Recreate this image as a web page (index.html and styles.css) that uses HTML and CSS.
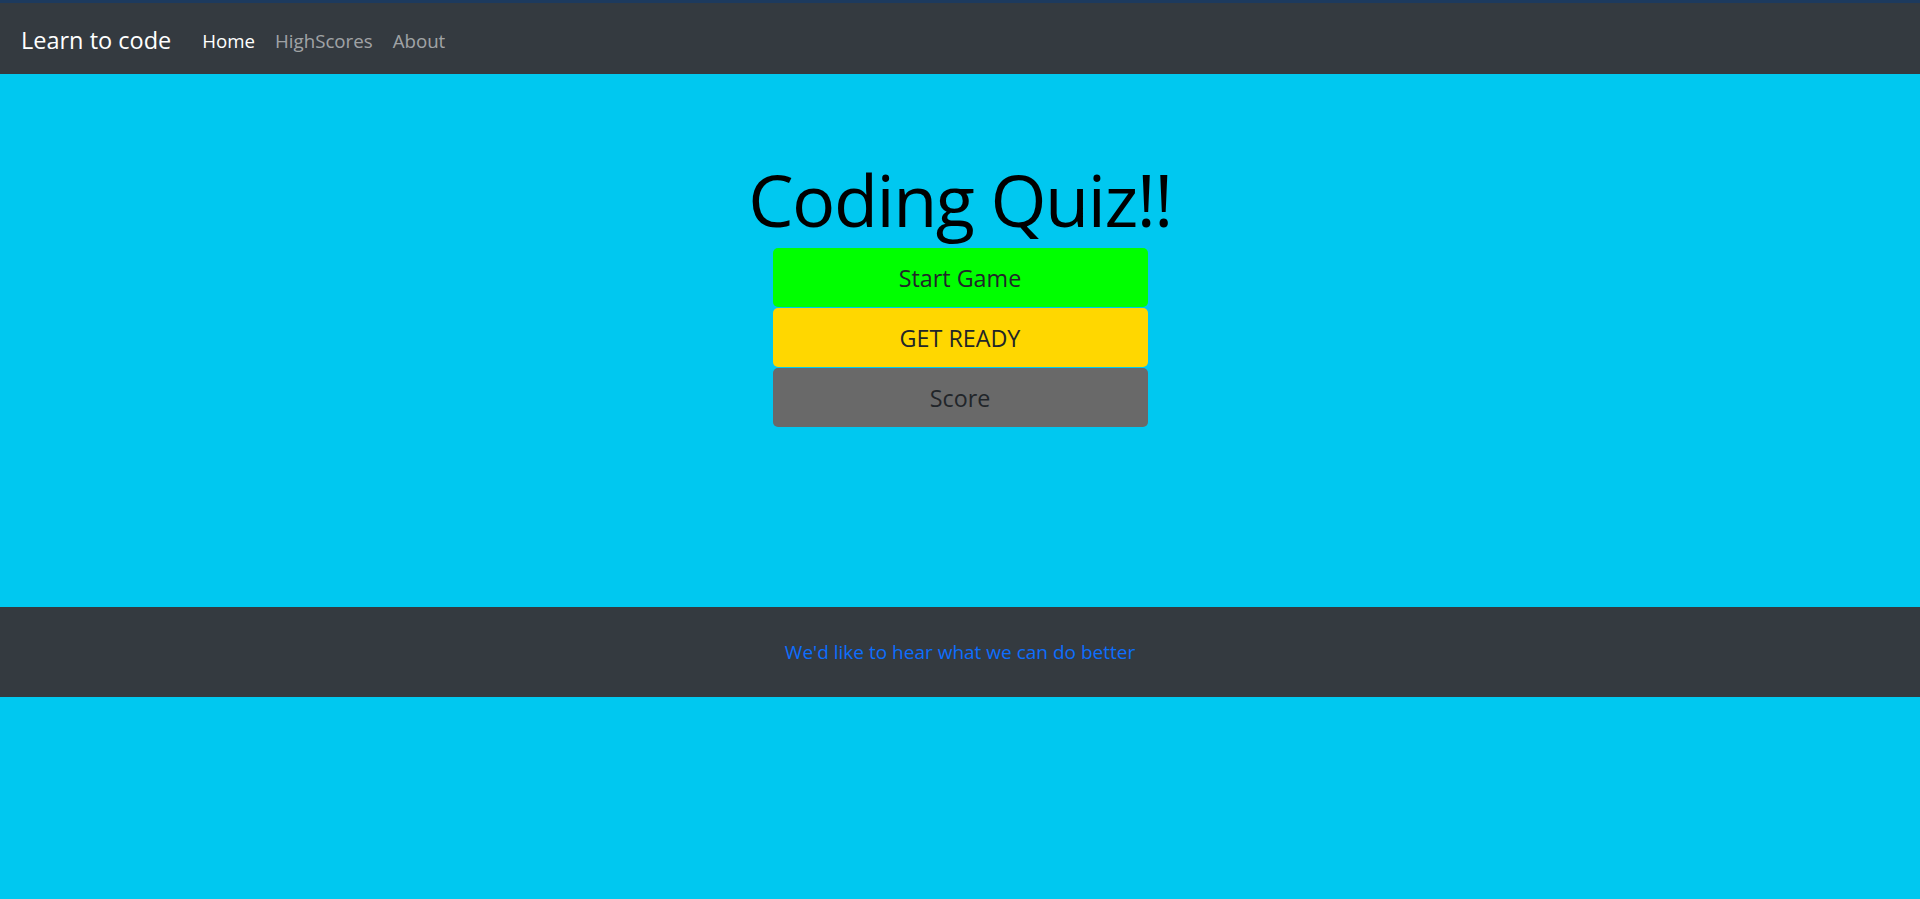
FILE: index.html
```html
<!DOCTYPE html>
<html lang="en">
<head>
<meta charset="utf-8">
<title>Coding Quiz</title>
<link rel="stylesheet" href="styles.css">
</head>
<body>
<nav class="navbar">
  <a class="brand" href="#">Learn to code</a>
  <ul class="nav-links">
    <li><a class="nav-link active" href="#">Home</a></li>
    <li><a class="nav-link" href="#">HighScores</a></li>
    <li><a class="nav-link" href="#">About</a></li>
  </ul>
</nav>
<main class="main">
  <h1 class="title">Coding Quiz!!</h1>
  <div class="buttons">
    <button class="btn btn-start">Start Game</button>
    <button class="btn btn-ready">GET READY</button>
    <button class="btn btn-score">Score</button>
  </div>
</main>
<footer class="footer">
  <a class="footer-link" href="#">We'd like to hear what we can do better</a>
</footer>
</body>
</html>
```
FILE: styles.css
```css
* { box-sizing: border-box; }
html, body { margin: 0; padding: 0; }
body {
  background: #00c8f0;
  font-family: "Open Sans", "Noto Sans", sans-serif;
  color: #212529;
  min-height: 899px;
}
.navbar {
  display: flex;
  align-items: center;
  height: 74px;
  border-top: 3px solid #1d3a5e;
  background: #343a40;
  padding: 3px 0 0 21px;
}
.brand {
  color: #fff;
  text-decoration: none;
  font-size: 23.5px;
  margin-right: 21px;
}
.nav-links {
  display: flex;
  list-style: none;
  margin: 0;
  padding: 0;
}
.nav-link {
  display: block;
  padding: 8px 10px;
  color: rgba(255,255,255,0.55);
  text-decoration: none;
  font-size: 18.7px;
}
.nav-link.active { color: #fff; }
.main {
  height: 533px;
  display: flex;
  flex-direction: column;
  align-items: center;
  padding-top: 77px;
}
.title {
  margin: 0 0 1px;
  font-size: 72px;
  font-weight: 400;
  letter-spacing: -1.5px;
  line-height: 96px;
  color: #000;
}
.buttons {
  display: flex;
  flex-direction: column;
  gap: 1px;
  width: 375px;
}
.btn {
  height: 59px;
  border: none;
  border-radius: 5px;
  font-family: inherit;
  font-size: 23.3px;
  color: #212529;
}
.btn-start { background: #00ff00; }
.btn-ready { background: #ffd700; }
.btn-score { background: #696969; }
.footer {
  height: 90px;
  background: #343a40;
  display: flex;
  align-items: center;
  justify-content: center;
}
.footer-link {
  color: #0d6efd;
  text-decoration: none;
  font-size: 19px;
}
```
